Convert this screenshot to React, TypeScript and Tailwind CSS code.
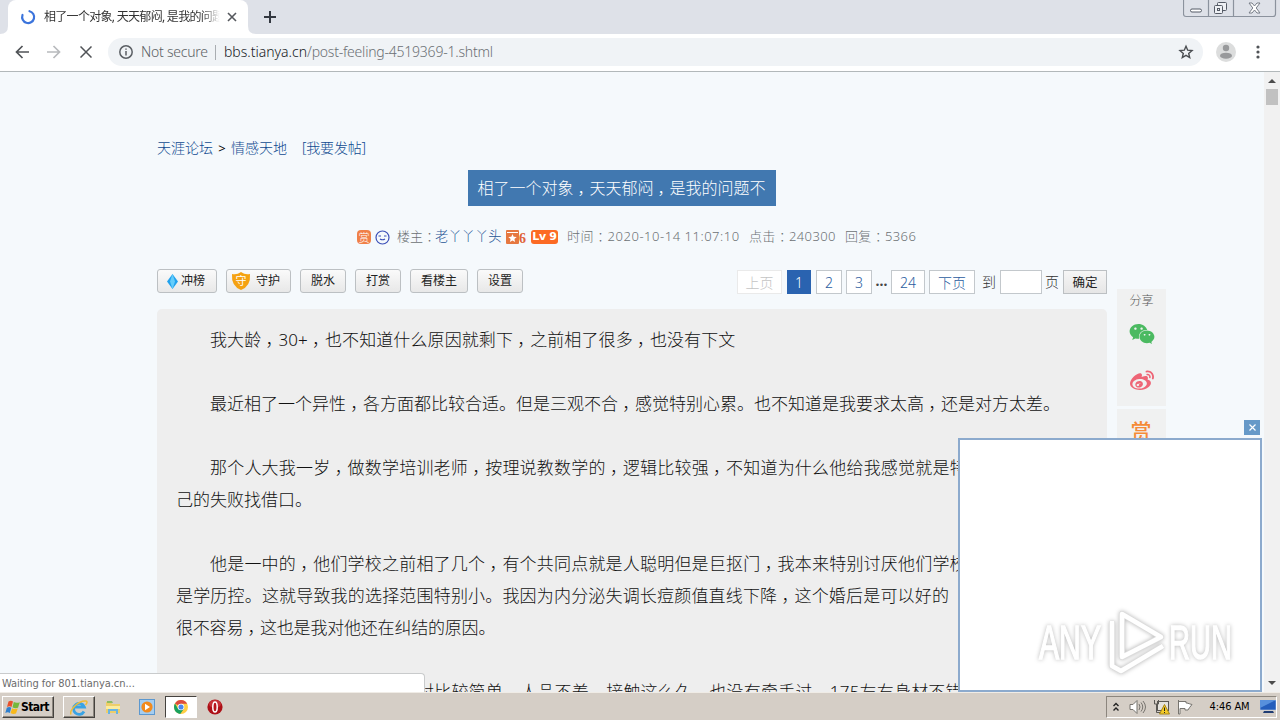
import { ReactNode } from 'react';
import { FaWeixin, FaWeibo } from 'react-icons/fa';

const ZH = "font-['Noto_Sans','Noto_Sans_CJK_SC',sans-serif]";

interface Line {
  text: string;
  style: string;
}

const LINES: Line[] = [
  { text: '我大龄，30+，也不知道什么原因就剩下，之前相了很多，也没有下文', style: 'pl-[34px] tracking-[0.1px]' },
  { text: '', style: '' },
  { text: '最近相了一个异性，各方面都比较合适。但是三观不合，感觉特别心累。也不知道是我要求太高，还是对方太差。', style: 'pl-[34px]' },
  { text: '', style: '' },
  { text: '那个人大我一岁，做数学培训老师，按理说教数学的，逻辑比较强，不知道为什么他给我感觉就是特', style: 'pl-[34px] tracking-[0.2px]' },
  { text: '己的失败找借口。', style: '' },
  { text: '', style: '' },
  { text: '他是一中的，他们学校之前相了几个，有个共同点就是人聪明但是巨抠门，我本来特别讨厌他们学校', style: 'pl-[34px] tracking-[0.2px]' },
  { text: '是学历控。这就导致我的选择范围特别小。我因为内分泌失调长痘颜值直线下降，这个婚后是可以好的', style: 'tracking-[0.18px]' },
  { text: '很不容易，这也是我对他还在纠结的原因。', style: 'tracking-[-0.2px]' },
  { text: '', style: '' },
  { text: '对比较简单，人品不差，接触这么久，也没有牵手过，175左右身材不错', style: 'pl-[241px] tracking-[0.2px]' },
];

const PAGES: { label: string; style: string }[] = [
  { label: '上页', style: 'w-[45px] border-[#eaeaea] bg-white text-[#c4c4c4] mr-[5px]' },
  { label: '1', style: 'w-6 border-[#2a63b0] bg-[#2a63b0] text-white mr-[5px]' },
  { label: '2', style: 'w-[26px] border-[#c3c8cc] bg-white text-[#2b5ca0] mr-1' },
  { label: '3', style: 'w-[26px] border-[#c3c8cc] bg-white text-[#2b5ca0]' },
  { label: '...', style: 'w-[19px] border-transparent font-bold text-[#444] pb-1' },
  { label: '24', style: 'w-[34px] border-[#c3c8cc] bg-white text-[#2b5ca0] mr-1' },
  { label: '下页', style: 'w-[46px] border-[#c3c8cc] bg-white text-[#2b5ca0]' },
];

// full-width commas and colons sit nearer the middle of their cell
function Zh({ children }: { children: string }) {
  return (
    <span>
      {children.split(/([，：])/).map((s, i) =>
        s === '，' || s === '：' ? <span key={i} className="pl-[0.25em] pr-[0.25em] [font-feature-settings:'halt']">{s}</span> : s
      )}
    </span>
  );
}

function ToolButton({ className, children }: { className: string; children: ReactNode }) {
  return (
    <button className={`h-6 flex items-center justify-center rounded-[3px] border border-[#bcc0c3] bg-gradient-to-b from-[#fafafa] to-[#e8e8e8] text-[12px] text-[#222] whitespace-nowrap ${className}`}>
      {children}
    </button>
  );
}

function WindowControls() {
  return (
    <svg className="absolute right-[3px] top-0" width="94" height="18" viewBox="0 0 94 18" fill="none" stroke="#8b929d">
      <path d="M.5 0v14q0 2.500 2.500 2.500h87q2.500 0 2.500-2.500V0M25.500 0v16M50.500 0v16" strokeWidth="1.200" />
      <rect x="7.500" y="9" width="11" height="3" rx="1.500" fill="#fff" stroke="#555b66" />
      <g stroke="#555b66" fill="#eef0f4">
        <rect x="34.500" y="2.500" width="9" height="8" rx="1" />
        <rect x="31.500" y="5.500" width="8" height="8" rx="1" />
        <rect x="34.500" y="8.500" width="2" height="2" />
      </g>
      <path d="M66 3h3l2.500 3L74 3h3l-3.800 5 3.800 5h-3l-2.500-3-2.500 3h-3l3.800-5z" fill="#fff" stroke="#777d87" />
    </svg>
  );
}

function TabStrip() {
  return (
    <div className="relative flex h-[34px] bg-[#dee1e8]">
      <svg className="self-end" width="8" height="8"><path d="M8 0v8H0q8 0 8-8" fill="#fff" /></svg>
      <div className="flex items-center w-[240px] rounded-t-lg bg-white pl-3">
        <svg width="16" height="16" viewBox="0 0 16 16" fill="none" stroke="#3b74dc" strokeWidth="2.200" strokeLinecap="round">
          <path d="M9.500 2.200A6 6 0 1 1 2.500 6" />
        </svg>
        <div className={`ml-2 w-[176px] overflow-hidden whitespace-nowrap text-[12px] tracking-[-0.7px] text-[#333] [mask-image:linear-gradient(to_right,black_90%,transparent)] ${ZH}`}>
          相了一个对象, 天天郁闷, 是我的问题
        </div>
        <svg className="ml-[7px]" width="10" height="10" stroke="#55585d" strokeWidth="1.600"><path d="m1 1 8 8M9 1 1 9" /></svg>
      </div>
      <svg className="self-end" width="8" height="8"><path d="M0 0v8h8Q0 8 0 0" fill="#fff" /></svg>
      <svg className="ml-2 mt-[11px]" width="12" height="12" stroke="#333840" strokeWidth="2"><path d="M6 0v12M0 6h12" /></svg>
      <WindowControls />
    </div>
  );
}

function Toolbar() {
  return (
    <div className="flex items-center h-[38px] border-b border-[#b2b8ba] bg-white pb-[2px]">
      <svg className="ml-[15px]" width="14" height="14" fill="none" stroke="#505357" strokeWidth="1.700"><path d="M14 7H1.500M7.500 1l-6 6 6 6" /></svg>
      <svg className="ml-[18px]" width="14" height="14" fill="none" stroke="#b8babd" strokeWidth="1.700"><path d="M0 7h12.500M6.500 1l6 6-6 6" /></svg>
      <svg className="ml-[19px]" width="12" height="12" stroke="#505357" strokeWidth="1.500"><path d="m.5.500 11 11M11.500.500l-11 11" /></svg>
      <div className="flex items-center ml-4 w-[1095px] h-7 rounded-full bg-[#f0f3f6] pl-[11px] pr-[9px]">
        <svg width="14" height="14" fill="none" stroke="#5b5f64" strokeWidth="1.500">
          <circle cx="7" cy="7" r="6.200" /><path d="M7 6v4.500M7 3.500v1.300" />
        </svg>
        <svg className="ml-2" width="360" height="22">
          <g fontSize="14" fontFamily="Noto Sans" fontWeight="300">
            <text x="0" y="16" textLength="67" fill="#5b5f64">Not secure</text>
            <text x="83" y="16" textLength="83" fill="#16191d">bbs.tianya.cn</text>
            <text x="166" y="16" textLength="186" fill="#6b6f74">/post-feeling-4519369-1.shtml</text>
          </g>
          <path d="M74.500 4v15" stroke="#a9adb1" />
        </svg>
        <svg className="ml-auto" width="16" height="16" fill="none" stroke="#4a4d51" strokeWidth="1.400">
          <path d="m8 2.200 1.700 4 4.300.4-3.300 2.800 1 4.200L8 11.400l-3.700 2.200 1-4.200L2 6.600l4.300-.4z" />
        </svg>
      </div>
      <svg className="ml-[13px]" width="20" height="20">
        <circle cx="10" cy="10" r="10" fill="#dcdddd" />
        <circle cx="10" cy="6" r="3.200" fill="#98999b" /><ellipse cx="10" cy="13.700" rx="6" ry="3" fill="#98999b" />
      </svg>
      <svg className="ml-[19px]" width="6" height="16" fill="#505357">
        <circle cx="3" cy="3" r="1.600" /><circle cx="3" cy="8" r="1.600" /><circle cx="3" cy="13" r="1.600" />
      </svg>
    </div>
  );
}

function PostMeta() {
  return (
    <div className="flex items-center h-5 mt-[21px] pl-[200px] text-[13px] font-light text-[#6c7174] whitespace-nowrap">
      <span className="flex items-center justify-center w-[14px] h-[14px] rounded-sm bg-[#f08048] text-[11px] leading-none text-white">赏</span>
      <svg className="ml-1" width="15" height="15" fill="none" stroke="#3c50b8" strokeWidth="1.200">
        <circle cx="7.500" cy="7.500" r="6.500" /><path d="M3.500 6H6M9 6h2.500M5 9q2.500 1.500 5 0" />
      </svg>
      <span className="ml-[7px] w-[38px]"><Zh>楼主：</Zh></span>
      <span className="w-[71px] text-[13.300px] text-[#1f5596]">老丫丫丫头</span>
      <svg width="13" height="14">
        <rect width="13" height="14" rx="1" fill="#e67840" />
        <path d="M1 2.500h11" stroke="#fff" />
        <path d="m6.500 4 1.200 2.800 3 .2-2.300 2 .7 2.900-2.600-1.500-2.600 1.500.7-2.900-2.300-2 3-.2z" fill="#fff" />
      </svg>
      <span className="w-3 pt-1 font-['Liberation_Serif',serif] text-[14px] leading-none font-bold text-[#e0643a]">6</span>
      <span className="flex items-center justify-center w-[27px] h-[14px] rounded-[3px] bg-[#fc6a24] font-['DejaVu_Sans',sans-serif] text-[11px] font-bold tracking-[-0.3px] text-white">Lv 9</span>
      <span className="ml-[9px] w-[182px] tracking-[0.53px]"><Zh>时间：2020-10-14 11:07:10</Zh></span>
      <span className="w-24 tracking-[0.35px]"><Zh>点击：240300</Zh></span>
      <span className="tracking-[0.35px]"><Zh>回复：5366</Zh></span>
    </div>
  );
}

function PostToolbar() {
  return (
    <div className="flex h-[25px] mt-[22px]">
      <ToolButton className="w-[60px] pr-[2px]">
        <svg className="mr-[3px]" width="11" height="15">
          <path d="M5.500 0 11 7.500 5.500 15 0 7.500z" fill="#22a2ed" /><path d="M5.500 0 8 7.500 5.500 15 3 7.500z" fill="#65cdfb" />
        </svg>
        冲榜
      </ToolButton>
      <ToolButton className="w-[65px] ml-[9px] pr-[6px]">
        <svg className="mr-[5px]" width="20" height="18">
          <path d="M1 2q5 1 9-2 4 3 9 2 1 12-9 16Q0 14 1 2" fill="#f5a212" />
          <text x="4.500" y="13" fontSize="11" fill="#fff" fontFamily="Noto Sans CJK SC">守</text>
        </svg>
        守护
      </ToolButton>
      <ToolButton className="w-[46px] ml-[9px]">脱水</ToolButton>
      <ToolButton className="w-[46px] ml-[9px]">打赏</ToolButton>
      <ToolButton className="w-[58px] ml-[9px]">看楼主</ToolButton>
      <ToolButton className="w-[46px] ml-[9px]">设置</ToolButton>
      <div className="flex ml-auto text-[14px] font-light text-[#333] leading-[25px]">
        {PAGES.map(p => (
          <span key={p.label} className={`flex items-center justify-center h-[24px] mt-px border ${p.style}`}>{p.label}</span>
        ))}
        <span className="ml-[7px] w-[18px]">到</span>
        <span className="w-[42px] h-[24px] mt-px border border-[#c3c8cc] bg-white" />
        <span className="ml-[3px] w-[18px]">页</span>
        <span className="flex items-center justify-center w-11 h-[24px] mt-px border border-[#bcc0c3] bg-gradient-to-b from-[#f6f6f6] to-[#e6e6e6] text-[12.500px] font-normal text-[#222]">确定</span>
      </div>
    </div>
  );
}

function ShareBar() {
  return (
    <div className="ml-[10px] mt-[217px] w-[49px] shrink-0 text-center">
      <div className="flex flex-col items-center h-[117px] bg-[#f0f1f1]">
        <span className="mt-[2px] text-[12px] leading-5 font-light text-[#555]">分享</span>
        <FaWeixin className="mt-[10px] text-[#4bba61]" size={26} />
        <FaWeibo className="mt-[22px] text-[#ee6576]" size={24} />
      </div>
      <div className="mt-[3px] h-20 bg-[#f0f1f1] pt-2 pr-px text-[21px] leading-7 font-medium text-[#f58b37]">赏</div>
    </div>
  );
}

function Scrollbar() {
  return (
    <div className="flex flex-col items-center w-4 shrink-0 bg-[#f1f1f1]">
      <svg className="mt-[7px]" width="8" height="4"><path d="M4 0 8 4H0z" fill="#4c4c4c" /></svg>
      <div className="mt-[6px] w-3 h-4 bg-[#c1c1c1]" />
      <svg className="mt-auto mb-[7px]" width="8" height="4"><path d="M0 0h8L4 4z" fill="#4c4c4c" /></svg>
    </div>
  );
}

function Watermark() {
  return (
    <svg className="absolute left-[1030px] top-[602px] drop-shadow-[0_0_2px_rgba(0,0,0,0.28)]" width="210" height="80" viewBox="0 0 210 80">
      <g fill="#fff" stroke="#fff" strokeWidth="1.400" fontFamily="Liberation Sans Narrow, Liberation Sans" fontSize="49">
        <text x="9" y="57" textLength="62" lengthAdjust="spacingAndGlyphs">ANY</text>
        <text x="139" y="57" textLength="63" lengthAdjust="spacingAndGlyphs">RUN</text>
      </g>
      <g fill="none" stroke="#dcdcdc" strokeWidth="6" strokeLinejoin="round">
        <path d="M82 19v45l9 5 42-25M92 12v43l39-20z" />
      </g>
      <g fill="none" stroke="#fff" strokeWidth="4.500" strokeLinejoin="round">
        <path d="M82 19v45l9 5 42-25M92 12v43l39-20z" />
      </g>
    </svg>
  );
}

function AdPopup() {
  return (
    <>
      <div className="absolute left-[1244px] top-[420px] flex items-center justify-center w-4 h-[15px] bg-[#6699c8]">
        <svg width="7" height="7" stroke="#fff" strokeWidth="1.200"><path d="m.5.500 6 6M6.500.500l-6 6" /></svg>
      </div>
      <div className="absolute left-[958px] top-[438px] w-[304px] h-[254px] border-2 border-[#8caacd] bg-white" />
    </>
  );
}

function ChromeIcon() {
  return (
    <svg width="14" height="14" viewBox="0 0 16 16">
      <circle cx="8" cy="8" r="8" fill="#ffce44" />
      <path d="M8 8 1.100 4A8 8 0 0 1 15 4.200H8z" fill="#dd4b3e" />
      <path d="M8 8 4.600 10 1.100 4a8 8 0 0 0 6 11.950L11.400 10z" fill="#19a15f" />
      <circle cx="8" cy="8" r="3.800" fill="#fff" /><circle cx="8" cy="8" r="2.900" fill="#4a86ee" />
    </svg>
  );
}

function Taskbar() {
  return (
    <div className="flex items-center h-7 bg-[#d5cec6] border-t border-[#f0ece6] pt-px">
      <div className="flex items-center w-[52px] h-[22px] ml-[2px] pl-[2px] border border-t-white border-l-white border-r-[#45423e] border-b-[#45423e] shadow-[inset_-1px_-1px_#8c867e]">
        <svg width="16" height="15" viewBox="0 0 16 15">
          <path d="M3.500 1.500Q6 0 8 1.500L6.500 7q-2-1.500-4.500 0z" fill="#e9512b" />
          <path d="M8.800 2q2.500 1.500 6 .3L13 7.800Q10 9 7.500 7.300z" fill="#75b83b" />
          <path d="M1.800 7.700q2.500-1.500 4.500 0L4.800 13q-2-1.500-4.500 0z" fill="#2f80cf" />
          <path d="M7.200 8.200q2.500 1.500 5.500.4L11 13.500q-3 1-5.500-.5z" fill="#f8b91b" />
        </svg>
        <span className="font-['DejaVu_Sans_Condensed','DejaVu_Sans',sans-serif] text-[12px] font-bold tracking-[-0.6px] text-black">Start</span>
      </div>
      <div className="flex items-center justify-center w-8 h-[22px] ml-[9px] border border-t-white border-l-white border-r-[#45423e] border-b-[#45423e] shadow-[inset_-1px_-1px_#8c867e]">
        <svg width="18" height="17" viewBox="0 0 18 17" fill="none">
          <path d="M14 12.500a5.500 5.500 0 1 1 .3-4.500H5" stroke="#39a3e4" strokeWidth="2.800" />
          <path d="M1 15.500C-1 11 9 1 16 2c2 .5.500 3-.5 4" stroke="#efbc36" strokeWidth="1.500" />
        </svg>
      </div>
      <svg className="ml-[10px]" width="16" height="16" viewBox="0 0 16 16">
        <path d="M1 3h5l1 2h8v9H1z" fill="#edce69" /><path d="M2 2h5l1 2H2z" fill="#8dbb62" />
        <path d="M1 7h14v3H1z" fill="#fbec9f" /><path d="M3 15v-5h10v5h-2v-3H5v3z" fill="#68b4e2" />
      </svg>
      <svg className="ml-[18px]" width="16" height="16">
        <rect x=".5" y=".5" width="15" height="15" fill="#a4cdf0" stroke="#5c98cf" />
        <circle cx="8" cy="8" r="5.600" fill="#f28a1c" /><path d="m6 4.800 5 3.200-5 3.200z" fill="#fff" />
      </svg>
      <div className="flex items-center justify-center w-8 h-[22px] ml-[10px] border border-t-[#45423e] border-l-[#45423e] border-r-white border-b-white bg-white">
        <ChromeIcon />
      </div>
      <svg className="ml-[10px]" width="16" height="16">
        <circle cx="8" cy="8" r="7.600" fill="#ad1017" /><ellipse cx="8" cy="5" rx="6" ry="4" fill="#d8474b" opacity=".6" />
        <ellipse cx="8" cy="8" rx="2.200" ry="5" fill="#b81419" stroke="#fff" strokeWidth="1.500" />
      </svg>
      <div className="flex items-center ml-auto mr-[3px] w-[171px] h-[22px] border border-t-[#8c867e] border-l-[#8c867e] border-r-white border-b-white pl-[5px]">
        <svg width="8" height="10" fill="none" stroke="#222" strokeWidth="1.400"><path d="m1.500 4 2.500-2.500L6.500 4M1.500 8.500 4 6l2.500 2.500" /></svg>
        <svg className="ml-[9px]" width="17" height="16" fill="none" stroke="#77746f">
          <path d="M1 5.500h3l4-4v13l-4-4H1z" fill="#fff" /><path d="M10 5q2 3 0 6M12 3.500q3.500 4.500 0 9M14 2q5 6 0 12" />
        </svg>
        <svg className="ml-[7px]" width="17" height="16" fill="none" stroke="#5a5854">
          <rect x="4.500" y="2.500" width="11" height="9" fill="#e5e3de" /><path d="M1.500 1v4h4V1M3.500 5v8.500H8M10 12v2" />
          <path d="m11.500 5.500 5 9.500h-10z" fill="#f4cb27" stroke="#a78516" /><path d="M11.500 8.500v3.500M11.500 13v1" stroke="#222" />
        </svg>
        <svg className="ml-[7px]" width="17" height="16" fill="#fff" stroke="#77746f">
          <path d="M1.500 1v14h1.500V9.500h5v1.500h3q1-2 4-5.500-2-.5-5-1.500H9V2.500H1.500z" />
        </svg>
        <span className="ml-4 w-[43px] font-['DejaVu_Sans_Condensed','DejaVu_Sans',sans-serif] text-[11px] tracking-[-0.1px] whitespace-nowrap text-black">4:46 AM</span>
        <svg className="ml-2" width="16" height="14">
          <rect width="16" height="10" fill="#245ebc" stroke="#cfdcea" strokeWidth=".5" /><path d="M0 0h16L0 8z" fill="#5790dc" />
          <path d="M4 11h9l1 2H3z" fill="#1f3c72" />
        </svg>
      </div>
    </div>
  );
}

export default function App() {
  return (
    <div className={`relative flex flex-col w-[1280px] h-[720px] overflow-hidden bg-white ${ZH}`}>
      <TabStrip />
      <Toolbar />
      <div className="flex h-[620px] overflow-hidden bg-[#f5f9fc]">
        <div className="flex flex-1">
          <main className="w-[951px] ml-[156px] pl-px shrink-0">
            <div className="flex items-center h-5 mt-[65px] text-[14px] font-light text-[#0f4a90] whitespace-pre">
              天涯论坛<span className="w-[18px] pt-[3px] text-center text-[13px] font-normal text-black">&gt;</span>情感天地<span className="ml-[15px] tracking-[-0.2px]">[我要发帖]</span>
            </div>
            <h1 className="flex items-center justify-center w-[308px] h-9 mt-[13px] ml-[311px] bg-[#4178b0] pr-px text-[16px] font-light whitespace-nowrap text-white"><Zh>相了一个对象，天天郁闷，是我的问题不</Zh></h1>
            <PostMeta />
            <PostToolbar />
            <article className="h-[400px] mt-[15px] rounded-[5px] bg-[#eee] pt-[15px] pl-[19px] text-[17px] font-light text-[#111]">
              {LINES.map((l, i) => (
                <p key={i} className={`h-8 leading-8 whitespace-nowrap ${l.style}`}><Zh>{l.text}</Zh></p>
              ))}
            </article>
          </main>
          <ShareBar />
        </div>
        <Scrollbar />
      </div>
      <Taskbar />
      <AdPopup />
      <Watermark />
      <div className="absolute left-0 top-[673px] w-[425px] h-[19px] rounded-tr border-t border-r border-[#c9cbcc] bg-white pl-[2px] font-['DejaVu_Sans_Condensed','DejaVu_Sans',sans-serif] text-[11px] leading-[19px] tracking-[-0.05px] text-[#6b6b6b]">
        Waiting for 801.tianya.cn...
      </div>
    </div>
  );
}
